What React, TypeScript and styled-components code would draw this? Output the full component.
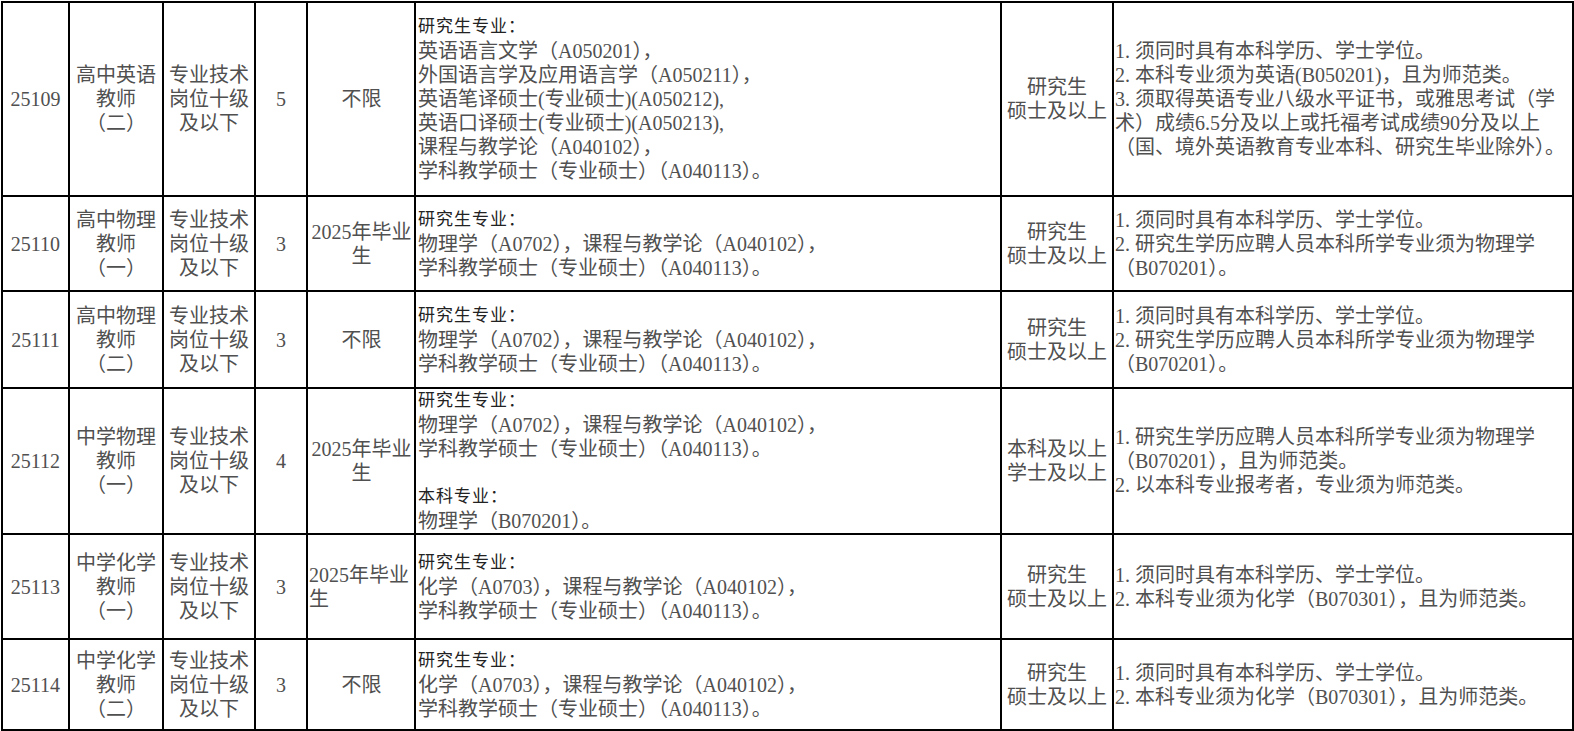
import styled, { createGlobalStyle } from 'styled-components'

const GlobalStyle = createGlobalStyle`
  html, body {
    margin: 0;
    padding: 0;
    background: #fff;
  }
  body {
    font-family: 'Liberation Serif', 'Noto Sans CJK SC', serif;
  }
`

interface Post {
  code: string
  name: string[]
  level: string[]
  count: string
  grad: string[]
  gradAlign?: 'left' | 'center'
  majors: string[] // '#' 开头 = 小标题, '' = 空行
  edu: string[]
  reqs: string[]
  height: number
}

const physMajors = ['#研究生专业：', '物理学（A0702），课程与教学论（A040102），', '学科教学硕士（专业硕士）（A040113）。']
const chemMajors = ['#研究生专业：', '化学（A0703），课程与教学论（A040102），', '学科教学硕士（专业硕士）（A040113）。']
const physReqs = ['1. 须同时具有本科学历、学士学位。', '2. 研究生学历应聘人员本科所学专业须为物理学', '（B070201）。']
const chemReqs = ['1. 须同时具有本科学历、学士学位。', '2. 本科专业须为化学（B070301），且为师范类。']
const level = ['专业技术', '岗位十级', '及以下']
const master = ['研究生', '硕士及以上']

const posts: Post[] = [
  {
    code: '25109',
    name: ['高中英语', '教师', '（二）'],
    level,
    count: '5',
    grad: ['不限'],
    majors: [
      '#研究生专业：',
      '英语语言文学（A050201），',
      '外国语言学及应用语言学（A050211），',
      '英语笔译硕士(专业硕士)(A050212),',
      '英语口译硕士(专业硕士)(A050213),',
      '课程与教学论（A040102），',
      '学科教学硕士（专业硕士）（A040113）。',
    ],
    edu: master,
    reqs: [
      '1. 须同时具有本科学历、学士学位。',
      '2. 本科专业须为英语(B050201)，且为师范类。',
      '3. 须取得英语专业八级水平证书，或雅思考试（学',
      '术）成绩6.5分及以上或托福考试成绩90分及以上',
      '（国、境外英语教育专业本科、研究生毕业除外）。',
    ],
    height: 194,
  },
  {
    code: '25110',
    name: ['高中物理', '教师', '（一）'],
    level,
    count: '3',
    grad: ['2025年毕业', '生'],
    majors: physMajors,
    edu: master,
    reqs: physReqs,
    height: 95,
  },
  {
    code: '25111',
    name: ['高中物理', '教师', '（二）'],
    level,
    count: '3',
    grad: ['不限'],
    majors: physMajors,
    edu: master,
    reqs: physReqs,
    height: 97,
  },
  {
    code: '25112',
    name: ['中学物理', '教师', '（一）'],
    level,
    count: '4',
    grad: ['2025年毕业', '生'],
    majors: [...physMajors, '', '#本科专业：', '物理学（B070201）。'],
    edu: ['本科及以上', '学士及以上'],
    reqs: ['1. 研究生学历应聘人员本科所学专业须为物理学', '（B070201），且为师范类。', '2. 以本科专业报考者，专业须为师范类。'],
    height: 144,
  },
  {
    code: '25113',
    name: ['中学化学', '教师', '（一）'],
    level,
    count: '3',
    grad: ['2025年毕业', '生'],
    gradAlign: 'left',
    majors: chemMajors,
    edu: master,
    reqs: chemReqs,
    height: 105,
  },
  {
    code: '25114',
    name: ['中学化学', '教师', '（二）'],
    level,
    count: '3',
    grad: ['不限'],
    majors: chemMajors,
    edu: master,
    reqs: chemReqs,
    height: 91,
  },
]

const colWidths = [67, 94, 92, 52, 108, 586, 112, 460]
const tableWidth = colWidths.reduce((a, b) => a + b, 0)

const Lines = ({ items }: { items: string[] }) => (
  <>
    {items.map((t, i) => {
      if (t === '') return <Blank key={i} />
      if (t.startsWith('#')) return <Heading key={i}>{t.slice(1)}</Heading>
      return <Line key={i}>{t}</Line>
    })}
  </>
)

const App = () => {
  return (
    <Page>
      <GlobalStyle />
      <Table $w={tableWidth}>
        <colgroup>
          {colWidths.map((w, i) => (
            <col key={i} style={{ width: w }} />
          ))}
        </colgroup>
        <tbody>
          {posts.map((p) => (
            <Row key={p.code} $h={p.height}>
              <Cell>{p.code}</Cell>
              <Cell>
                <Lines items={p.name} />
              </Cell>
              <Cell>
                <Lines items={p.level} />
              </Cell>
              <Cell>{p.count}</Cell>
              <Cell $align={p.gradAlign ?? 'center'} $tight>
                <Lines items={p.grad} />
              </Cell>
              <Cell $align="left">
                <Lines items={p.majors} />
              </Cell>
              <Cell>
                <Lines items={p.edu} />
              </Cell>
              <Cell $align="left" $tight>
                <Lines items={p.reqs} />
              </Cell>
            </Row>
          ))}
        </tbody>
      </Table>
    </Page>
  )
}

export default App

const Page = styled.div`
  padding: 1px 0 0 1px;
`

const Table = styled.table<{ $w: number }>`
  border-collapse: collapse;
  table-layout: fixed;
  width: ${({ $w }) => $w}px;
  font-size: 20px;
  line-height: 24px;
  color: #505050;
`

const Row = styled.tr<{ $h: number }>`
  height: ${({ $h }) => $h}px;
`

const Cell = styled.td<{ $align?: 'left' | 'center'; $tight?: boolean }>`
  border: 2px solid #000;
  padding: ${({ $tight }) => ($tight ? '0 0 0 1px' : '0 2px')};
  text-align: ${({ $align }) => $align ?? 'center'};
  vertical-align: middle;
  white-space: nowrap;
  overflow: visible;
`

const Line = styled.div``

const Heading = styled.div`
  font-size: 17px;
  letter-spacing: 1px;
  color: #222;
`

const Blank = styled.div`
  height: 24px;
`
